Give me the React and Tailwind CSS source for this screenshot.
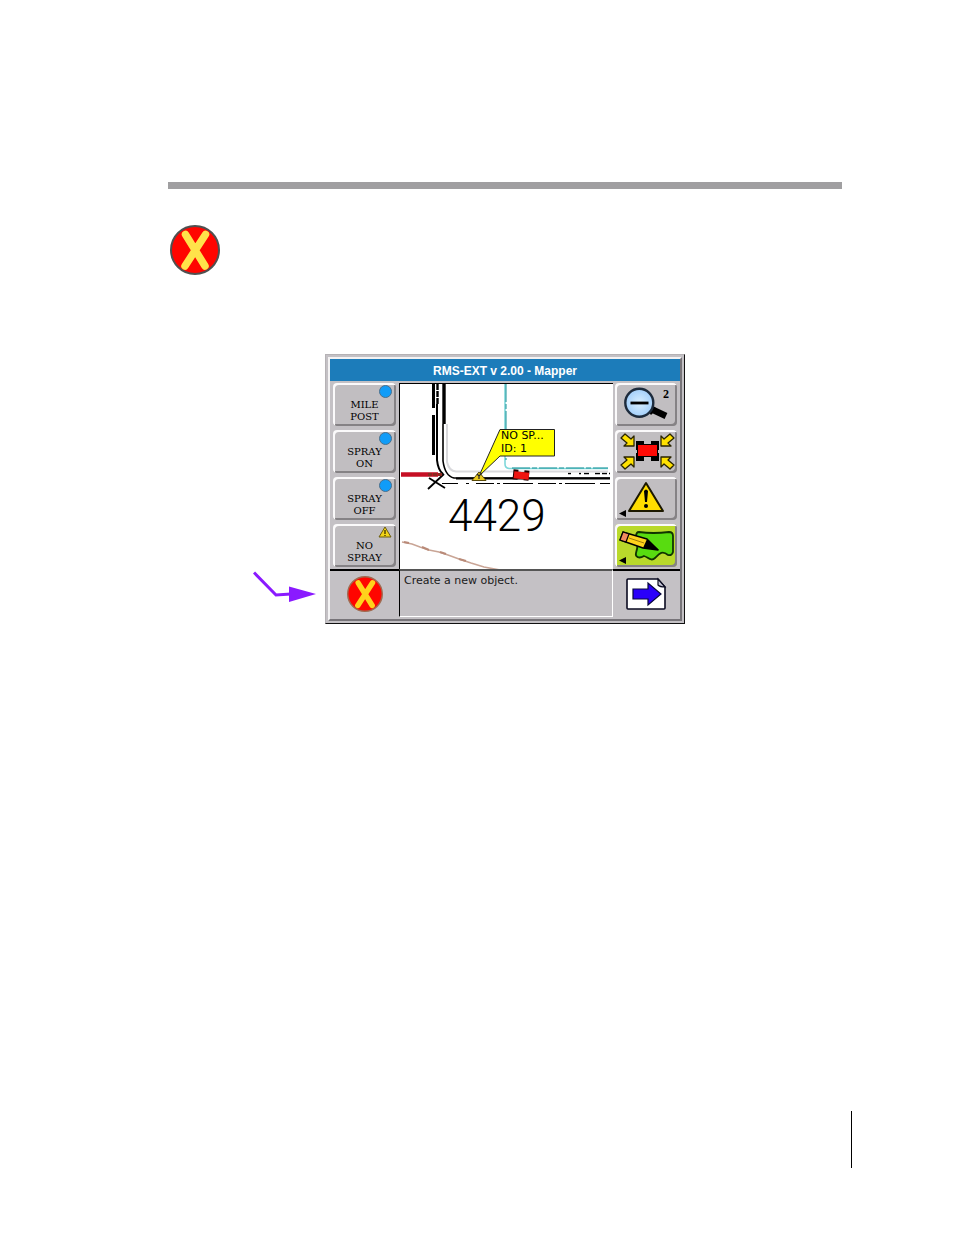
// App.jsx — Manual page showing the RMS-EXT mapper screen with the cancel button called out

const OBJECT_BUTTONS = [
  { lines: ["MILE", "POST"], marker: "dot" },
  { lines: ["SPRAY", "ON"], marker: "dot" },
  { lines: ["SPRAY", "OFF"], marker: "dot" },
  { lines: ["NO", "SPRAY"], marker: "warning" },
];

const KEY_CLASS =
  "relative block h-[43px] w-full rounded-[4px] shadow-[inset_2px_2px_0_#fbfafb,inset_-2px_-2px_0_#858285]";

function CancelIcon({ className, ring, cross }) {
  return (
    <svg viewBox="0 0 50 50" className={className} aria-hidden="true">
      <circle cx="25" cy="25" r="24" fill="#ff0500" stroke={ring} strokeWidth="2" />
      <path d="M15.5 9.5 L35 41 M35.5 9.5 L15 41" stroke={cross} strokeWidth="7.5" strokeLinecap="round" />
    </svg>
  );
}

function Marker({ type }) {
  if (type === "dot") {
    return (
      <span className="absolute top-[2px] right-1 h-[13px] w-[13px] rounded-full border border-[#4a6f8c] bg-[#109cf8]" />
    );
  }
  return (
    <svg viewBox="0 0 14 12" className="absolute top-[2px] right-1 h-3 w-3.5" aria-hidden="true">
      <path d="M7 1 L13 11 H1 Z" fill="#f2d418" stroke="#6b5c10" strokeLinejoin="round" />
      <path d="M7 4 V8 M7 9 V10" stroke="#4a3c00" strokeWidth="1.4" />
    </svg>
  );
}

function ObjectButton({ lines, marker }) {
  return (
    <button
      type="button"
      className={`${KEY_CLASS} bg-[#c1bec1] pt-1 text-center font-['DejaVu_Serif',serif] text-[10px] leading-3 text-black`}
    >
      <Marker type={marker} />
      <span className="block pt-2">
        {lines.map((line) => (
          <span key={line} className="block">
            {line}
          </span>
        ))}
      </span>
    </button>
  );
}

function ToolButton({ label, active, children }) {
  return (
    <button type="button" aria-label={label} className={`${KEY_CLASS} ${active ? "bg-[#b9d92b]" : "bg-[#c1bec1]"}`}>
      <svg viewBox="0 0 62 43" className="h-full w-full">
        {children}
      </svg>
    </button>
  );
}

function ZoomOutArt() {
  return (
    <>
      <defs>
        <radialGradient id="lens">
          <stop offset="0" stopColor="#d9efff" />
          <stop offset="1" stopColor="#a3cffa" />
        </radialGradient>
      </defs>
      <path d="M34 25 L51 33" stroke="#000" strokeWidth="6.5" />
      <path d="M32 27 L37 22 L42 26 L36 32 Z" />
      <circle cx="24.3" cy="19.7" r="14" fill="url(#lens)" stroke="#1d2b3c" strokeWidth="2.4" />
      <path d="M15.5 20 H33.5" stroke="#000" strokeWidth="2.8" />
      <text x="48" y="15" fontSize="12" className="font-['Liberation_Serif',serif] font-bold">
        2
      </text>
    </>
  );
}

function CenterVehicleArt() {
  return (
    <>
      <path d="M21 11 H29 V14 H36 V11 H44 V20 H43 V23 H44 V31 H36 V27 H29 V31 H21 V23 H22 V20 H21 Z" />
      <rect x="23" y="15" width="19" height="11" fill="#ff0a05" />
      <g fill="#ffe100" stroke="#2a2500" strokeWidth="1.3" strokeLinejoin="round">
        <path d="M19 16 V6 L16 9 L10 4 L6 8 L12 13 L9 16 Z" />
        <path d="M46 16 V6 L49 9 L55 4 L59 8 L53 13 L56 16 Z" />
        <path d="M19 27 V37 L16 34 L10 39 L6 35 L12 30 L9 27 Z" />
        <path d="M46 27 V37 L49 34 L55 39 L59 35 L53 30 L56 27 Z" />
      </g>
    </>
  );
}

function WarningArt() {
  return (
    <>
      <path d="M31 6 L48 34 H14 Z" fill="#ffdd00" stroke="#1c1800" strokeWidth="2" strokeLinejoin="round" />
      <path d="M29 14 Q31 11 33 14 L32 25 H30 Z" />
      <circle cx="31" cy="29" r="2" />
      <path d="M4 36.5 L11 33 V40 Z" />
    </>
  );
}

function DrawAreaArt() {
  return (
    <>
      <path
        d="M24 8 Q38 10 54 8 Q58 8 58 12 V28 Q57 32 53 31 C47 26 44 30 40 34 C36 38 33 33 29 32 C24 35 20 33 21 29 Q24 20 21 13 Q21 8 24 8 Z"
        fill="#58dc10"
        stroke="#103400"
        strokeWidth="1.8"
      />
      <path d="M8 8 L32 15 L43 26 L28 24 L5 16 Z" fill="#ffd21c" stroke="#000" strokeWidth="1.4" strokeLinejoin="round" />
      <path d="M8 8 L14 10 L11 18 L5 16 Z" fill="#f08a60" stroke="#000" strokeWidth="1.2" />
      <path d="M32 15 L44 26 L28 24 Z" />
      <path d="M14 14 L29 19" stroke="#8a6400" strokeWidth="0.8" />
      <path d="M4 36.5 L11 33 V40 Z" />
    </>
  );
}

function NextPageArt() {
  return (
    <svg viewBox="0 0 67 46" className="h-full w-full">
      <path d="M15 8 H45 L52 16 V37 Q52 38 51 38 H15 Q14 38 14 37 V9 Q14 8 15 8 Z" fill="#fff" stroke="#0a0a20" strokeWidth="1.6" />
      <path d="M45 8 V14 Q47 16 52 16 Z" fill="#c8c8d8" stroke="#0a0a20" strokeWidth="1.2" />
      <path d="M20 18 H35 V12 L48 23 L35 34 V28 H20 Z" fill="#2a00fa" stroke="#08083c" strokeWidth="1.2" />
    </svg>
  );
}

function MapView() {
  return (
    <svg
      viewBox="0 0 213 185"
      preserveAspectRatio="xMinYMin slice"
      className="h-full w-full border-t border-l border-black bg-white"
      role="img"
      aria-label="Map"
    >
      {/* survey lines */}
      <g fill="none" stroke="#000">
        <path d="M33.5 0 V24 M33.5 31 V71" strokeWidth="3" />
        <path d="M37.5 0 V20" strokeWidth="2.4" strokeDasharray="6 1" />
        <path d="M37 20 V76 Q38 86 43 90" strokeWidth="2" />
        <path d="M44 0 V40" strokeWidth="3.4" />
        <path d="M43 40 V77 Q45 92 54 94 H210" strokeWidth="1.6" />
        <path d="M56 94.5 H210" strokeWidth="2" />
        <path d="M42 99.5 H58 M66 99.5 H69 M76 99.5 H210" strokeWidth="1.2" strokeDasharray="18 3 3 3 30 5" />
        <path d="M168 89.5 H171 M179 89.5 H181 M184 89.5 H190 M195 89.5 H210" strokeWidth="1.4" strokeDasharray="5 2" />
        <path d="M28 105 L44 90 M29 94 L45 104" strokeWidth="1.8" />
      </g>
      <path d="M47 40 V78 Q49 87 56 87.5 H208" fill="none" stroke="#d9d9dc" strokeWidth="2" />
      <path d="M105 0 V80 Q105 84 109 84.5 H208" fill="none" stroke="#7fd8da" strokeWidth="1.6" />
      <path d="M106 0 V76 M112 84 H208" fill="none" stroke="#168f96" strokeWidth="1" strokeDasharray="18 2 5 2" />
      <path d="M1 90.5 H38" stroke="#c60f24" strokeWidth="4.5" />
      <path d="M28 90.5 H42" stroke="#8a2a20" strokeWidth="3" strokeDasharray="4 1" />
      <path
        d="M2 158 L12 160 L20 163 L29 166 L39 168 L48 171 L59 175 L71 179 L84 183 L100 186"
        fill="none"
        stroke="#c9a596"
        strokeWidth="1.6"
      />
      <path d="M4 158 L9 159 M22 163 L29 166 M40 168 L46 170 M59 175 L66 177" stroke="#b98a78" strokeWidth="2" />

      {/* vehicle */}
      <g transform="rotate(6 121 91)">
        <path d="M113 86 H118 V88 H124 V86 H129 V96 H124 V95 H118 V96 H113 Z" fill="#200" />
        <rect x="114" y="88" width="15" height="7" fill="#ef1410" />
      </g>

      {/* callout */}
      <path d="M79 92 L100 45.5 H154.5 V72 H100 Z" fill="#ffff00" stroke="#222" strokeWidth="1" />
      <path d="M79 88 L86 96.5 H72 Z" fill="#e8c81c" stroke="#5a4a08" strokeWidth="1" />
      <path d="M77 90 L79 92 L82 89 M79 92 V95" fill="none" stroke="#222" strokeWidth="1.2" />
      <g className="font-['DejaVu_Sans',sans-serif]" fontSize="11">
        <text x="101" y="55">NO SP...</text>
        <text x="101" y="68">ID: 1</text>
      </g>

      <text x="48" y="147" fontSize="44" className="font-['Roboto',sans-serif] font-light">
        4429
      </text>
    </svg>
  );
}

function MapperScreen() {
  return (
    <section className="w-full max-w-[360px] border border-t-[#b5b2b5] border-r-[#111] border-b-[#111] border-l-[#b5b2b5] bg-[#c4c1c5] p-0.5">
      <div className="border-2 border-t-[#f4f3f4] border-r-[#777479] border-b-[#777479] border-l-[#f4f3f4] pb-0.5">
        <h1 className="bg-[#1c7cba] pt-0.5 text-center font-['Liberation_Sans',sans-serif] text-[12px] leading-5 font-bold text-white">
          RMS-EXT v 2.00 - Mapper
        </h1>

        <div className="mt-0.5 grid grid-cols-[69px_1fr_67px] grid-rows-[186px_auto]">
          <div className="flex flex-col gap-1 px-[3px]">
            {OBJECT_BUTTONS.map((b) => (
              <ObjectButton key={b.lines.join(" ")} {...b} />
            ))}
          </div>

          <MapView />

          <div className="flex flex-col gap-1 pr-[3px] pl-0.5">
            <ToolButton label="Zoom out">
              <ZoomOutArt />
            </ToolButton>
            <ToolButton label="Center on vehicle">
              <CenterVehicleArt />
            </ToolButton>
            <ToolButton label="Warnings">
              <WarningArt />
            </ToolButton>
            <ToolButton label="Draw area" active>
              <DrawAreaArt />
            </ToolButton>
          </div>

          <button type="button" aria-label="Cancel" className="flex h-12 items-center justify-center border-t-2 border-black">
            <CancelIcon className="h-9 w-9" ring="#a06a50" cross="#ffd21c" />
          </button>
          <p className="border border-t-2 border-t-[#555] border-r-white border-b-white border-l-black pl-1 font-['DejaVu_Sans',sans-serif] text-[11px] leading-5 text-[#1a1a1a]">
            Create a new object.
          </p>
          <button type="button" aria-label="Next page" className="h-12 border-t-2 border-black">
            <NextPageArt />
          </button>
        </div>
      </div>
    </section>
  );
}

export default function App() {
  return (
    <div className="flex min-h-screen flex-col bg-white">
      <main className="pt-[182px] pr-[112px] pl-[168px]">
        <hr className="h-[7px] border-0 bg-[#a09fa1]" />
        <CancelIcon className="mt-9 ml-0.5 h-[50px] w-[50px]" ring="#505050" cross="#ffe24a" />

        <figure className="mt-[79px] grid grid-cols-[1fr_minmax(0,360px)_1fr]">
          <svg viewBox="0 0 64 32" className="mr-2 mb-[21px] h-8 w-16 self-end justify-self-end" aria-hidden="true">
            <path d="M1 1.5 L23 24 L38 23" fill="none" stroke="#8a1aff" strokeWidth="3" />
            <path d="M36 15.5 L63 23 L36 31 Z" fill="#8a1aff" />
          </svg>
          <MapperScreen />
        </figure>
      </main>

      <footer className="mt-auto mr-[102px] mb-[67px] h-[57px] border-r border-black" />
    </div>
  );
}
